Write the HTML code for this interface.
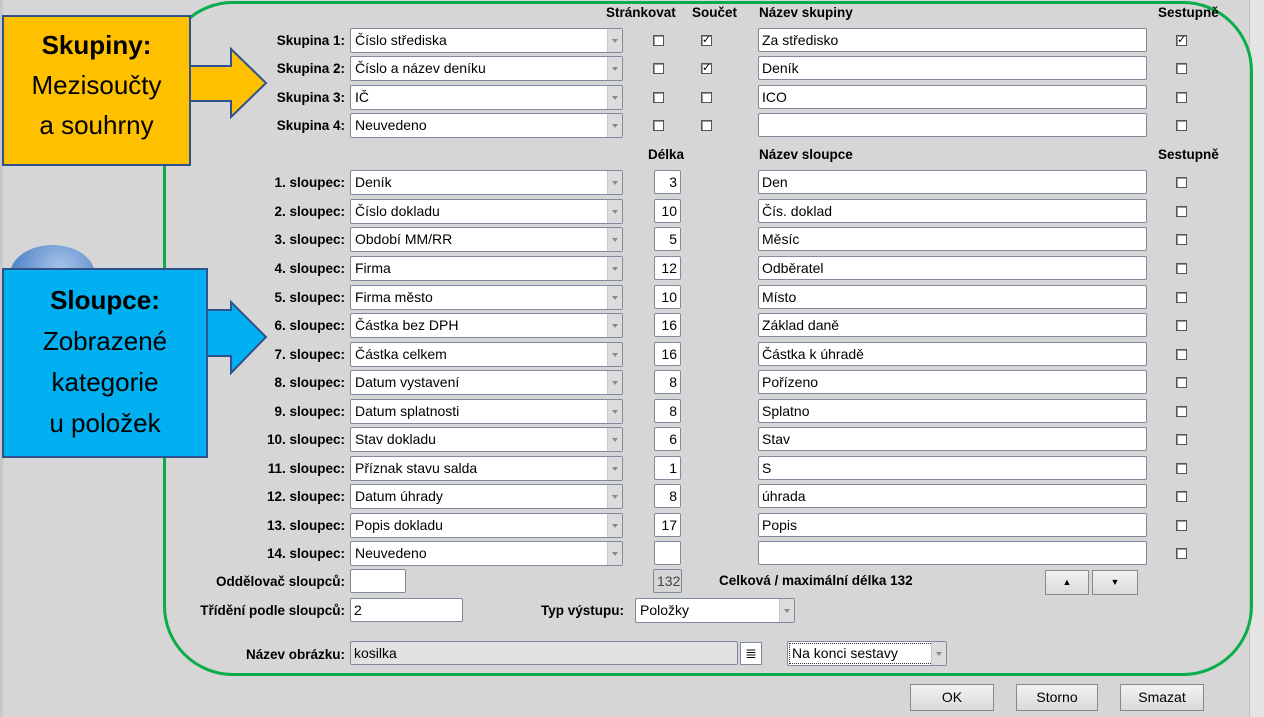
<!DOCTYPE html>
<html><head><meta charset="utf-8"><style>
body{margin:0;width:1264px;height:717px;background:#d6d6d6;position:relative;overflow:hidden;font-family:"Liberation Sans",Arial,sans-serif;font-size:14px;color:#000}
.a{position:absolute}
.lbl{position:absolute;right:919px;font-weight:bold;font-size:13.5px;line-height:25px;white-space:nowrap}
.combo{position:absolute;left:350px;width:273px;height:25px;box-sizing:border-box;background:#fff;border:1px solid #7f8a9c;border-radius:2px;padding-left:4px;line-height:23px;font-size:14px}
.combo:after{content:"";position:absolute;right:0;top:0;width:14px;height:23px;background:#dcdcdc;border-left:1px solid #c8c8c8}
.combo i{position:absolute;right:4px;top:10px;width:0;height:0;border-left:3px solid transparent;border-right:3px solid transparent;border-top:4px solid #8a8a8a;z-index:2}
.tf{position:absolute;height:24px;box-sizing:border-box;background:#fff;border:1px solid #7f8a9c;border-radius:2px;padding:0 3px;line-height:22px;font-size:14px}
.chk{position:absolute;width:11px;height:11px;box-sizing:border-box;background:#fff;border:1px solid #555;box-shadow:inset 1px 1px 0 #999;font-size:11px;line-height:9px;text-align:center}
.hd{position:absolute;font-weight:bold;font-size:13.5px}
.btn{position:absolute;top:684px;height:27px;box-sizing:border-box;border:1px solid #8a8a8a;background:linear-gradient(#f2f2f2,#dadada);text-align:center;line-height:25px;font-size:14px}
</style></head><body>
<div class="a" style="left:0;top:0;width:3px;height:717px;background:#c8c8c8"></div>
<div class="a" style="left:10px;top:245px;width:85px;height:60px;border-radius:50%;background:radial-gradient(circle at 60% 40%,#a8c4e8,#3a73c0)"></div>
<div class="a" style="left:1249px;top:0;width:15px;height:717px;background:#e4e4e4;border-left:1px solid #c0c0c0"></div>
<div class="a" style="left:163px;top:1px;width:1084px;height:669px;border:3px solid #0aad4a;border-radius:70px"></div>

<div class="hd" style="left:606px;top:5px">Stránkovat</div>
<div class="hd" style="left:692px;top:5px">Součet</div>
<div class="hd" style="left:759px;top:5px">Název skupiny</div>
<div class="hd" style="left:1158px;top:5px">Sestupně</div>
<div class="hd" style="left:648px;top:147px">Délka</div>
<div class="hd" style="left:759px;top:147px">Název sloupce</div>
<div class="hd" style="left:1158px;top:147px">Sestupně</div>

<div class="lbl" style="top:28px">Skupina 1:</div><div class="combo" style="top:28px">Číslo střediska<i></i></div>
<div class="chk" style="left:653px;top:35px"></div><div class="chk" style="left:701px;top:35px">✓</div>
<div class="tf" style="left:758px;top:28px;width:389px">Za středisko</div><div class="chk" style="left:1176px;top:35px">✓</div>
<div class="lbl" style="top:56px">Skupina 2:</div><div class="combo" style="top:56px">Číslo a název deníku<i></i></div>
<div class="chk" style="left:653px;top:63px"></div><div class="chk" style="left:701px;top:63px">✓</div>
<div class="tf" style="left:758px;top:56px;width:389px">Deník</div><div class="chk" style="left:1176px;top:63px"></div>
<div class="lbl" style="top:85px">Skupina 3:</div><div class="combo" style="top:85px">IČ<i></i></div>
<div class="chk" style="left:653px;top:92px"></div><div class="chk" style="left:701px;top:92px"></div>
<div class="tf" style="left:758px;top:85px;width:389px">ICO</div><div class="chk" style="left:1176px;top:92px"></div>
<div class="lbl" style="top:113px">Skupina 4:</div><div class="combo" style="top:113px">Neuvedeno<i></i></div>
<div class="chk" style="left:653px;top:120px"></div><div class="chk" style="left:701px;top:120px"></div>
<div class="tf" style="left:758px;top:113px;width:389px"></div><div class="chk" style="left:1176px;top:120px"></div>

<div class="lbl" style="top:170px">1. sloupec:</div><div class="combo" style="top:170px">Deník<i></i></div><div class="tf" style="left:654px;top:170px;width:27px;text-align:right">3</div><div class="tf" style="left:758px;top:170px;width:389px">Den</div><div class="chk" style="left:1176px;top:177px"></div>
<div class="lbl" style="top:199px">2. sloupec:</div><div class="combo" style="top:199px">Číslo dokladu<i></i></div><div class="tf" style="left:654px;top:199px;width:27px;text-align:right">10</div><div class="tf" style="left:758px;top:199px;width:389px">Čís. doklad</div><div class="chk" style="left:1176px;top:206px"></div>
<div class="lbl" style="top:227px">3. sloupec:</div><div class="combo" style="top:227px">Období MM/RR<i></i></div><div class="tf" style="left:654px;top:227px;width:27px;text-align:right">5</div><div class="tf" style="left:758px;top:227px;width:389px">Měsíc</div><div class="chk" style="left:1176px;top:234px"></div>
<div class="lbl" style="top:256px">4. sloupec:</div><div class="combo" style="top:256px">Firma<i></i></div><div class="tf" style="left:654px;top:256px;width:27px;text-align:right">12</div><div class="tf" style="left:758px;top:256px;width:389px">Odběratel</div><div class="chk" style="left:1176px;top:263px"></div>
<div class="lbl" style="top:285px">5. sloupec:</div><div class="combo" style="top:285px">Firma město<i></i></div><div class="tf" style="left:654px;top:285px;width:27px;text-align:right">10</div><div class="tf" style="left:758px;top:285px;width:389px">Místo</div><div class="chk" style="left:1176px;top:292px"></div>
<div class="lbl" style="top:313px">6. sloupec:</div><div class="combo" style="top:313px">Částka bez DPH<i></i></div><div class="tf" style="left:654px;top:313px;width:27px;text-align:right">16</div><div class="tf" style="left:758px;top:313px;width:389px">Základ daně</div><div class="chk" style="left:1176px;top:320px"></div>
<div class="lbl" style="top:342px">7. sloupec:</div><div class="combo" style="top:342px">Částka celkem<i></i></div><div class="tf" style="left:654px;top:342px;width:27px;text-align:right">16</div><div class="tf" style="left:758px;top:342px;width:389px">Částka k úhradě</div><div class="chk" style="left:1176px;top:349px"></div>
<div class="lbl" style="top:370px">8. sloupec:</div><div class="combo" style="top:370px">Datum vystavení<i></i></div><div class="tf" style="left:654px;top:370px;width:27px;text-align:right">8</div><div class="tf" style="left:758px;top:370px;width:389px">Pořízeno</div><div class="chk" style="left:1176px;top:377px"></div>
<div class="lbl" style="top:399px">9. sloupec:</div><div class="combo" style="top:399px">Datum splatnosti<i></i></div><div class="tf" style="left:654px;top:399px;width:27px;text-align:right">8</div><div class="tf" style="left:758px;top:399px;width:389px">Splatno</div><div class="chk" style="left:1176px;top:406px"></div>
<div class="lbl" style="top:427px">10. sloupec:</div><div class="combo" style="top:427px">Stav dokladu<i></i></div><div class="tf" style="left:654px;top:427px;width:27px;text-align:right">6</div><div class="tf" style="left:758px;top:427px;width:389px">Stav</div><div class="chk" style="left:1176px;top:434px"></div>
<div class="lbl" style="top:456px">11. sloupec:</div><div class="combo" style="top:456px">Příznak stavu salda<i></i></div><div class="tf" style="left:654px;top:456px;width:27px;text-align:right">1</div><div class="tf" style="left:758px;top:456px;width:389px">S</div><div class="chk" style="left:1176px;top:463px"></div>
<div class="lbl" style="top:484px">12. sloupec:</div><div class="combo" style="top:484px">Datum úhrady<i></i></div><div class="tf" style="left:654px;top:484px;width:27px;text-align:right">8</div><div class="tf" style="left:758px;top:484px;width:389px">úhrada</div><div class="chk" style="left:1176px;top:491px"></div>
<div class="lbl" style="top:513px">13. sloupec:</div><div class="combo" style="top:513px">Popis dokladu<i></i></div><div class="tf" style="left:654px;top:513px;width:27px;text-align:right">17</div><div class="tf" style="left:758px;top:513px;width:389px">Popis</div><div class="chk" style="left:1176px;top:520px"></div>
<div class="lbl" style="top:541px">14. sloupec:</div><div class="combo" style="top:541px">Neuvedeno<i></i></div><div class="tf" style="left:654px;top:541px;width:27px"></div><div class="tf" style="left:758px;top:541px;width:389px"></div><div class="chk" style="left:1176px;top:548px"></div>

<div class="lbl" style="top:569px">Oddělovač sloupců:</div><div class="tf" style="left:350px;top:569px;width:56px"></div>
<div class="tf" style="left:653px;top:569px;width:29px;background:#d6d6d6;color:#444">132</div>
<div class="hd" style="left:719px;top:573px">Celková / maximální délka 132</div>
<div class="btn" style="left:1045px;top:570px;width:44px;height:25px;font-size:9px;line-height:23px">▲</div>
<div class="btn" style="left:1092px;top:570px;width:46px;height:25px;font-size:9px;line-height:23px">▼</div>
<div class="lbl" style="top:598px">Třídění podle sloupců:</div><div class="tf" style="left:350px;top:598px;width:113px">2</div>
<div class="hd" style="left:541px;top:603px">Typ výstupu:</div>
<div class="combo" style="left:635px;top:598px;width:160px">Položky<i></i></div>
<div class="lbl" style="top:642px">Název obrázku:</div>
<div class="tf" style="left:350px;top:641px;width:388px;background:#e2e2e2">kosilka</div>
<div class="a" style="left:740px;top:642px;width:22px;height:23px;background:#fff;border:1px solid #7f8a9c;box-sizing:border-box;font-size:14px;line-height:20px;text-align:center">≣</div>
<div class="combo" style="left:787px;top:641px;width:160px;outline:1px dotted #333;outline-offset:-3px">Na konci sestavy<i></i></div>
<div class="btn" style="left:910px;width:84px">OK</div>
<div class="btn" style="left:1016px;width:82px">Storno</div>
<div class="btn" style="left:1120px;width:84px">Smazat</div>

<svg class="a" style="left:0;top:0" width="280" height="470">
<polygon points="190,66 231,66 231,49 266,83 231,117 231,101 190,101" fill="#ffc000" stroke="#2f528f" stroke-width="2"/>
<polygon points="205,310 231,310 231,302 266,337 231,373 231,356 205,356" fill="#00b0f0" stroke="#2f528f" stroke-width="2"/>
</svg>
<div class="a" style="left:2px;top:15px;width:189px;height:151px;box-sizing:border-box;background:#ffc000;border:2px solid #2f528f;text-align:center;font-size:26px;line-height:40px;padding-top:8px">
<b>Skupiny:</b><br>Mezisoučty<br>a souhrny</div>
<div class="a" style="left:2px;top:268px;width:206px;height:190px;box-sizing:border-box;background:#00b0f0;border:2px solid #2f528f;text-align:center;font-size:26px;line-height:41px;padding-top:10px">
<b>Sloupce:</b><br>Zobrazené<br>kategorie<br>u položek</div>
</body></html>
